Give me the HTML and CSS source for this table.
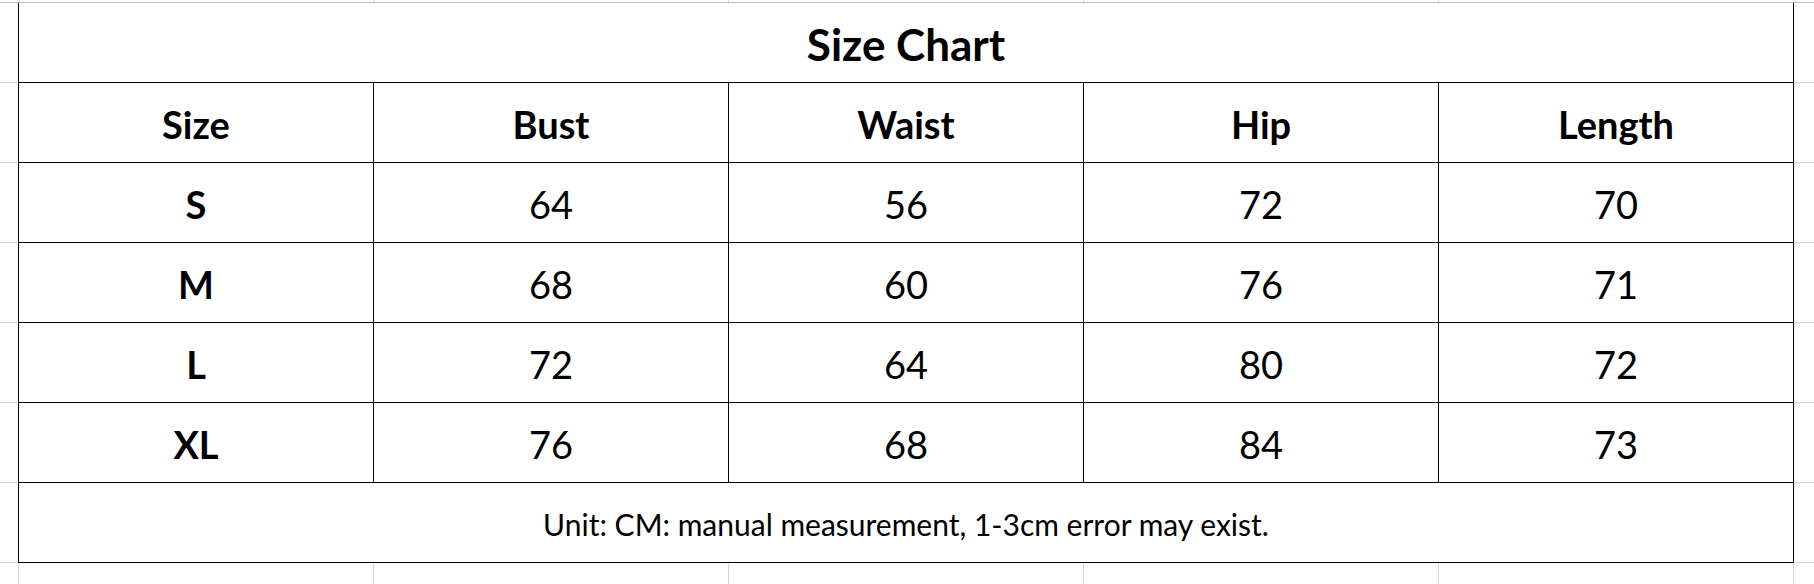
FILE: index.html
```html
<!DOCTYPE html>
<html lang="en">
<head>
<meta charset="utf-8">
<title>Size Chart</title>
<link rel="stylesheet" href="styles.css">
</head>
<body>
<div class="sheet">
  <div class="topbar"></div>
  <div class="chart">
    <div class="cell title">Size Chart</div>

    <div class="cell head">Size</div>
    <div class="cell head">Bust</div>
    <div class="cell head">Waist</div>
    <div class="cell head">Hip</div>
    <div class="cell head">Length</div>

    <div class="cell head">S</div>
    <div class="cell">64</div>
    <div class="cell">56</div>
    <div class="cell">72</div>
    <div class="cell">70</div>

    <div class="cell head">M</div>
    <div class="cell">68</div>
    <div class="cell">60</div>
    <div class="cell">76</div>
    <div class="cell">71</div>

    <div class="cell head">L</div>
    <div class="cell">72</div>
    <div class="cell">64</div>
    <div class="cell">80</div>
    <div class="cell">72</div>

    <div class="cell head">XL</div>
    <div class="cell">76</div>
    <div class="cell">68</div>
    <div class="cell">84</div>
    <div class="cell">73</div>

    <div class="cell note">Unit: CM: manual measurement, 1-3cm error may exist.</div>
  </div>
</div>
</body>
</html>
```

FILE: styles.css
```css
* { box-sizing: border-box; }

html, body {
  margin: 0;
  padding: 0;
  background: #ffffff;
}

.sheet {
  width: 1814px;
  height: 584px;
  overflow: hidden;
  background-color: #ffffff;
  background-image:
    repeating-linear-gradient(to right, #d6d6d6 0 1px, transparent 1px 355px),
    repeating-linear-gradient(to bottom, #d6d6d6 0 1px, transparent 1px 80px);
  background-position: 18px 0, 0 2px;
  font-family: "Lato", "Open Sans", sans-serif;
  color: #000000;
}

.topbar {
  height: 3px;
  border-bottom: 1px solid #b7b7cf;
}

.chart {
  margin-left: 18px;
  width: 1776px;
  display: grid;
  grid-template-columns: repeat(5, 355px);
  grid-auto-rows: 80px;
  border-left: 1px solid #000000;
  background: #ffffff;
}

.cell {
  display: flex;
  align-items: center;
  justify-content: center;
  padding-top: 2px;
  border-right: 1px solid #000000;
  border-bottom: 1px solid #000000;
  font-size: 38px;
  font-weight: 400;
  line-height: 1;
}

.title {
  grid-column: 1 / -1;
  font-size: 44px;
  font-weight: 700;
  padding-top: 2px;
}

.head {
  font-size: 38px;
  font-weight: 700;
}

.note {
  grid-column: 1 / -1;
  font-size: 30px;
  padding-top: 2px;
}
```
